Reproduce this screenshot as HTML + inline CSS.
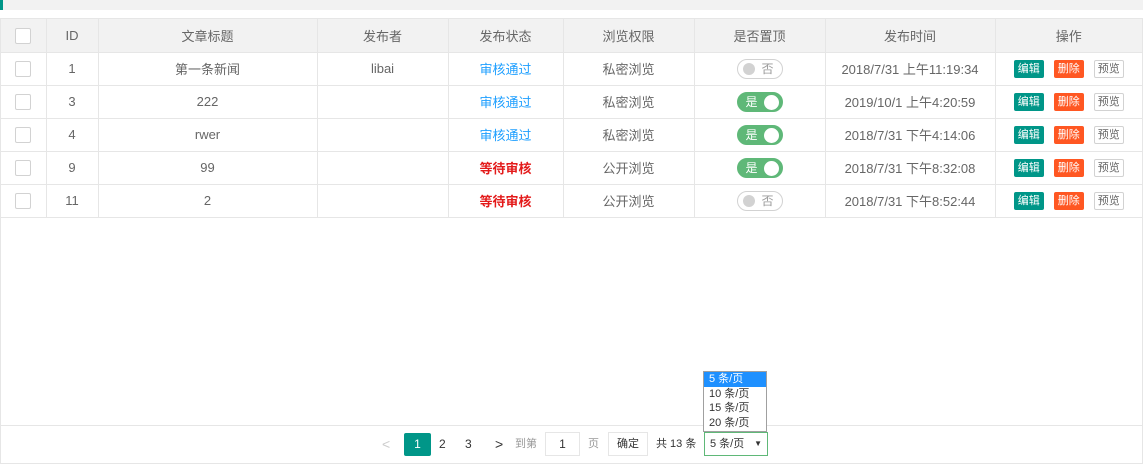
<!DOCTYPE html>
<html><head><meta charset="utf-8"><style>
*{margin:0;padding:0;box-sizing:border-box}
body{width:1143px;height:475px;background:#fff;font-family:"Liberation Sans","Noto Sans CJK SC",sans-serif;font-size:13px;color:#666;position:relative;overflow:hidden}
.top{position:absolute;left:0;top:0;width:1143px;height:10px;background:#f2f2f2}
.top i{position:absolute;left:0;top:0;width:3px;height:10px;background:#009688}
.wrap{position:absolute;left:0;top:18px;width:1143px;height:446px;border:1px solid #e6e6e6}
table{border-collapse:collapse;table-layout:fixed;width:1141px;position:absolute;left:0;top:0}
th,td{border-right:1px solid #e6e6e6;border-bottom:1px solid #e6e6e6;text-align:center;font-weight:normal;height:33px;padding:0}
th{background:#f2f2f2;height:33px}
th:last-child,td:last-child{border-right:none}
.cb{display:inline-block;width:16px;height:16px;border:1px solid #d2d2d2;border-radius:2px;background:#fff;vertical-align:middle}
.ok{color:#1e9fff}.wait{color:#e31a1a;font-weight:bold}
.sw{display:inline-block;position:relative;width:46px;height:20px;border-radius:20px;border:1px solid #d2d2d2;vertical-align:middle;font-size:12px;line-height:18px;text-align:left}
.sw.off{background:#fff;color:#999}
.sw.off b{position:absolute;left:5px;top:3px;width:12px;height:12px;border-radius:50%;background:#d2d2d2}
.sw.off span{position:absolute;left:24px}
.sw.on{background:#5fb878;border-color:#5fb878;color:#fff}
.sw.on b{position:absolute;right:3px;top:2px;width:15px;height:15px;border-radius:50%;background:#fff}
.sw.on span{position:absolute;left:8px}
.btn{display:inline-block;width:30px;height:18px;line-height:18px;font-size:11px;color:#fff;margin:0 5px;vertical-align:middle;border-radius:2px}
.e{background:#009688}.d{background:#ff5722}.p{background:#fff;border:1px solid #d2d2d2;color:#666;line-height:16px}
.foot{position:absolute;left:0;top:406px;width:1141px;border-top:1px solid #e6e6e6;height:38px}
.pg{position:absolute;top:0;font-size:12px;color:#333;line-height:22px}
.dd{position:absolute;left:703px;top:371px;width:64px;height:61px;border:1px solid #a0a0a0;background:#fff;font-size:11px;color:#333;line-height:14.5px}
.dd div{padding-left:5px}
</style></head><body>
<div class="top"><i></i></div>
<div class="wrap">
<table>
<colgroup><col style="width:45px"><col style="width:52px"><col style="width:219px"><col style="width:131px"><col style="width:115px"><col style="width:131px"><col style="width:131px"><col style="width:170px"><col style="width:147px"></colgroup>
<tr><th><span class="cb"></span></th><th>ID</th><th>文章标题</th><th>发布者</th><th>发布状态</th><th>浏览权限</th><th>是否置顶</th><th>发布时间</th><th>操作</th></tr>
<tr><td><span class="cb"></span></td><td>1</td><td>第一条新闻</td><td>libai</td><td class="ok">审核通过</td><td>私密浏览</td><td><span class="sw off"><b></b><span>否</span></span></td><td>2018/7/31 上午11:19:34</td><td><span class="btn e">编辑</span><span class="btn d">删除</span><span class="btn p">预览</span></td></tr>
<tr><td><span class="cb"></span></td><td>3</td><td>222</td><td></td><td class="ok">审核通过</td><td>私密浏览</td><td><span class="sw on"><span>是</span><b></b></span></td><td>2019/10/1 上午4:20:59</td><td><span class="btn e">编辑</span><span class="btn d">删除</span><span class="btn p">预览</span></td></tr>
<tr><td><span class="cb"></span></td><td>4</td><td>rwer</td><td></td><td class="ok">审核通过</td><td>私密浏览</td><td><span class="sw on"><span>是</span><b></b></span></td><td>2018/7/31 下午4:14:06</td><td><span class="btn e">编辑</span><span class="btn d">删除</span><span class="btn p">预览</span></td></tr>
<tr><td><span class="cb"></span></td><td>9</td><td>99</td><td></td><td class="wait">等待审核</td><td>公开浏览</td><td><span class="sw on"><span>是</span><b></b></span></td><td>2018/7/31 下午8:32:08</td><td><span class="btn e">编辑</span><span class="btn d">删除</span><span class="btn p">预览</span></td></tr>
<tr><td><span class="cb"></span></td><td>11</td><td>2</td><td></td><td class="wait">等待审核</td><td>公开浏览</td><td><span class="sw off"><b></b><span>否</span></span></td><td>2018/7/31 下午8:52:44</td><td><span class="btn e">编辑</span><span class="btn d">删除</span><span class="btn p">预览</span></td></tr>
</table>
<div class="foot">
<span class="pg" style="left:381px;top:7px;color:#ccc;font-size:14px">&lt;</span>
<span class="pg" style="left:403px;top:7px;width:27px;height:23px;background:#009688;color:#fff;text-align:center;border-radius:2px">1</span>
<span class="pg" style="left:438px;top:7px">2</span>
<span class="pg" style="left:464px;top:7px">3</span>
<span class="pg" style="left:494px;top:7px;font-size:14px">&gt;</span>
<span class="pg" style="left:514px;top:7px;color:#999;font-size:11px">到第</span>
<span class="pg" style="left:544px;top:6px;width:35px;height:24px;border:1px solid #e6e6e6;text-align:center">1</span>
<span class="pg" style="left:587px;top:7px;color:#999;font-size:11px">页</span>
<span class="pg" style="left:607px;top:6px;width:40px;height:24px;border:1px solid #e6e6e6;text-align:center;font-size:11px">确定</span>
<span class="pg" style="left:655px;top:7px;font-size:11px">共 13 条</span>
<span class="pg" style="left:703px;top:6px;width:64px;height:24px;border:1px solid #5fb878;font-size:11px;padding-left:5px">5 条/页<span style="position:absolute;right:5px;font-size:8px">▼</span></span>
</div>
</div>
<div class="dd"><div style="background:#1e90ff;color:#fff">5 条/页</div><div>10 条/页</div><div>15 条/页</div><div>20 条/页</div></div>
</body></html>
